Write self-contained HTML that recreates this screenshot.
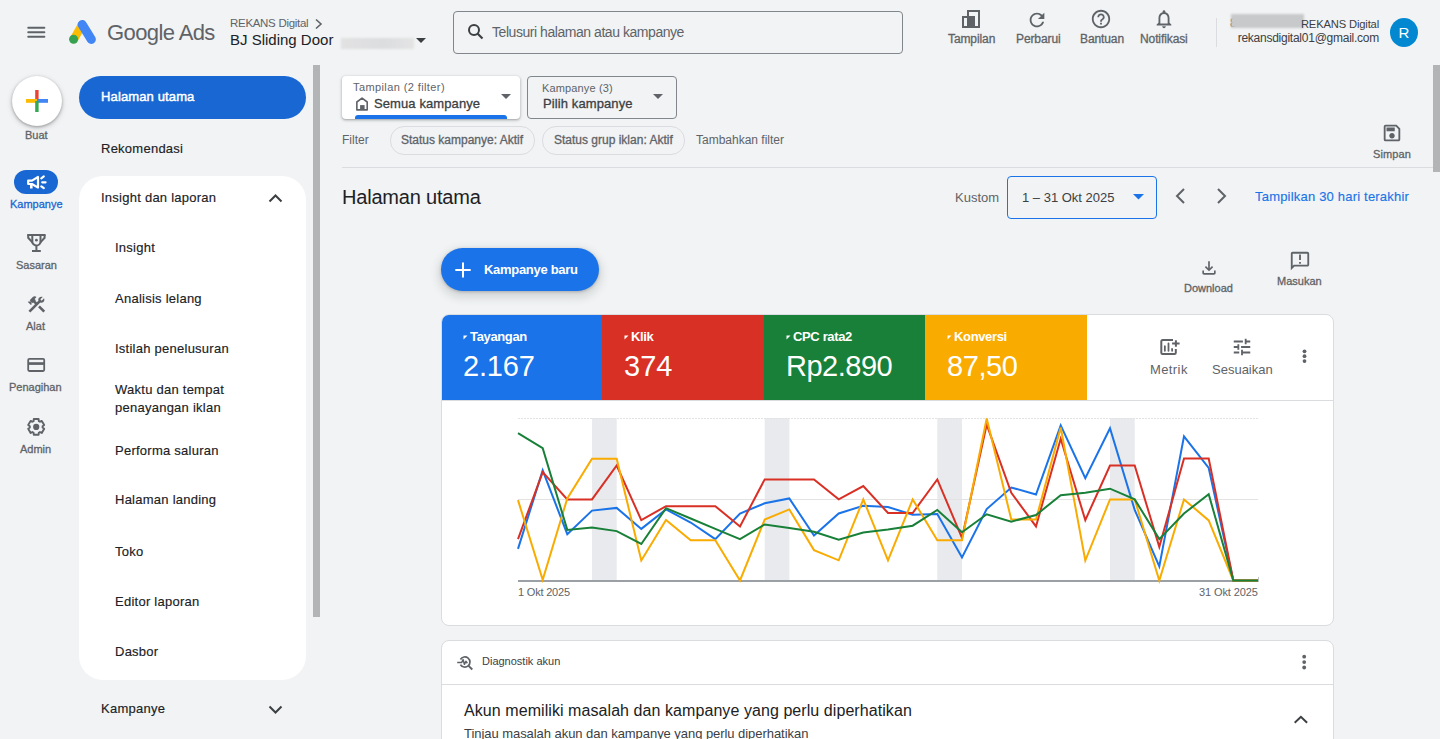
<!DOCTYPE html>
<html><head><meta charset="utf-8">
<style>
*{box-sizing:border-box;margin:0;padding:0}
html,body{width:1440px;height:739px;overflow:hidden;background:#f1f3f4;font-family:"Liberation Sans",sans-serif;color:#202124}
.a{position:absolute}
.t{position:absolute;white-space:nowrap;line-height:1}
.m{-webkit-text-stroke:0.3px currentColor}
.n{-webkit-text-stroke:0.15px currentColor}
svg{position:absolute;overflow:visible}
</style></head><body>

<!-- ===== TOP BAR ===== -->
<svg style="left:0;top:0" width="1440" height="64">
  <!-- hamburger -->
  <path d="M28.2,27.8 H44.4 M28.2,32.2 H44.4 M28.2,36.7 H44.4" stroke="#5f6368" stroke-width="1.9" stroke-linecap="round"/>
  <!-- ads logo -->
  <line x1="74" y1="39" x2="82" y2="25" stroke="#fbbc04" stroke-width="8.5" stroke-linecap="round"/>
  <line x1="82.2" y1="24.6" x2="91.3" y2="39.3" stroke="#4285f4" stroke-width="9.2" stroke-linecap="round"/>
  <circle cx="73.6" cy="39.2" r="4.5" fill="#36a150"/>
</svg>
<div class="t" style="left:107px;top:22px;font-size:22px;letter-spacing:-0.6px;color:#5f6368">Google Ads</div>
<div class="t" style="left:230px;top:17.5px;font-size:11.5px;letter-spacing:-0.3px;color:#5f6368">REKANS Digital</div>
<svg style="left:314px;top:17.5px" width="10" height="12"><path d="M2 1.5 L7 6 L2 10.5" fill="none" stroke="#5f6368" stroke-width="1.6"/></svg>
<div class="t" style="left:230px;top:32px;font-size:15px;color:#202124">BJ Sliding Door</div>
<div class="a" style="left:341px;top:38px;width:73px;height:11px;background:linear-gradient(90deg,#e2e2e3,#dcdddf 60%,#e4e4e5);filter:blur(0.8px)"></div>
<svg style="left:416px;top:38px" width="11" height="6"><path d="M0 0 L10 0 L5 5 Z" fill="#3c4043"/></svg>

<!-- search -->
<div class="a" style="left:453px;top:11px;width:450px;height:43px;border:1px solid #80868b;border-radius:4px"></div>
<svg style="left:467px;top:23px" width="18" height="18"><circle cx="7" cy="7" r="5" fill="none" stroke="#3c4043" stroke-width="2"/><line x1="10.5" y1="10.5" x2="15.5" y2="15.5" stroke="#3c4043" stroke-width="2.2"/></svg>
<div class="t" style="left:492px;top:25px;font-size:14px;letter-spacing:-0.45px;color:#5f6368">Telusuri halaman atau kampanye</div>

<!-- top right icons -->
<svg style="left:955px;top:5px" width="30" height="30"><rect x="968" y="11" width="11" height="16" transform="translate(-955,-5)" fill="none" stroke="#5f6368" stroke-width="2"/><rect x="963" y="17" width="11" height="10" transform="translate(-955,-5)" fill="none" stroke="#5f6368" stroke-width="2"/><rect x="967" y="16" width="8" height="12" transform="translate(-955,-5)" fill="#5f6368"/></svg>
<svg style="left:1026px;top:9px" width="22" height="22" viewBox="0 0 24 24"><path d="M17.65 6.35A7.958 7.958 0 0 0 12 4c-4.42 0-7.99 3.58-7.99 8s3.57 8 7.99 8c3.73 0 6.84-2.55 7.73-6h-2.08A5.99 5.99 0 0 1 12 18c-3.31 0-6-2.69-6-6s2.69-6 6-6c1.66 0 3.14.69 4.22 1.78L13 11h7V4l-2.35 2.35z" fill="#5f6368"/></svg>
<svg style="left:1090px;top:8px" width="22" height="22" viewBox="0 0 24 24"><path d="M11 18h2v-2h-2v2zm1-16C6.48 2 2 6.48 2 12s4.48 10 10 10 10-4.48 10-10S17.52 2 12 2zm0 18c-4.41 0-8-3.59-8-8s3.59-8 8-8 8 3.59 8 8-3.59 8-8 8zm0-14c-2.21 0-4 1.79-4 4h2c0-1.1.9-2 2-2s2 .9 2 2c0 2-3 1.75-3 5h2c0-2.25 3-2.5 3-5 0-2.21-1.79-4-4-4z" fill="#5f6368"/></svg>
<svg style="left:1153px;top:8px" width="22" height="22" viewBox="0 0 24 24"><path d="M12 22c1.1 0 2-.9 2-2h-4c0 1.1.89 2 2 2zm6-6v-5c0-3.07-1.64-5.64-4.5-6.32V4c0-.83-.67-1.5-1.5-1.5s-1.5.67-1.5 1.5v.68C7.63 5.36 6 7.92 6 11v5l-2 2v1h16v-1l-2-2zm-2 1H8v-6c0-2.48 1.51-4.5 4-4.5s4 2.02 4 4.5v6z" fill="#5f6368"/></svg>
<div class="t m" style="left:948px;top:33px;font-size:12px;letter-spacing:-0.1px;color:#5f6368">Tampilan</div>
<div class="t m" style="left:1016px;top:33px;font-size:12px;letter-spacing:-0.1px;color:#5f6368">Perbarui</div>
<div class="t m" style="left:1080px;top:33px;font-size:12px;letter-spacing:-0.1px;color:#5f6368">Bantuan</div>
<div class="t m" style="left:1140px;top:33px;font-size:12px;letter-spacing:-0.1px;color:#5f6368">Notifikasi</div>
<div class="a" style="left:1216px;top:18px;width:1px;height:29px;background:#dadce0"></div>
<div class="t" style="left:1230px;top:17px;font-size:12px;color:#3c4043">8</div>
<div class="a" style="left:1231px;top:14px;width:73px;height:14px;background:#c8c9cb;filter:blur(1px)"></div>
<div class="t" style="right:61px;top:19px;font-size:11.2px;letter-spacing:-0.15px;color:#3c4043">REKANS Digital</div>
<div class="t" style="right:61px;top:32px;font-size:12px;letter-spacing:-0.25px;color:#3c4043">rekansdigital01@gmail.com</div>
<div class="a" style="left:1390px;top:18px;width:28px;height:29px;border-radius:50%;background:#0288d1"></div>
<div class="t" style="left:1398.5px;top:25px;font-size:15px;color:#fff">R</div>


<!-- ===== RAIL ===== -->
<div class="a" style="left:12px;top:76px;width:50px;height:50px;border-radius:50%;background:#fff;box-shadow:0 1px 3px rgba(0,0,0,.3),0 2px 6px rgba(0,0,0,.15)"></div>
<svg style="left:0;top:0" width="60" height="120">
  <rect x="35.2" y="90" width="3.4" height="11" fill="#ea4335"/>
  <rect x="26" y="99" width="11" height="3.8" fill="#fbbc04"/>
  <rect x="37" y="99" width="11" height="3.8" fill="#4285f4"/>
  <rect x="35.2" y="101" width="3.4" height="11" fill="#34a853"/>
</svg>
<div class="t m" style="left:25px;top:130px;font-size:11px;color:#5f6368">Buat</div>

<div class="a" style="left:14px;top:170px;width:44px;height:24px;border-radius:12px;background:#1967d2"></div>
<svg style="left:12px;top:168px" width="48" height="28"><path d="M16.2,12.6 H20 L26,9 V19.6 L20,16 H16.2 Z" fill="none" stroke="#fff" stroke-width="2.2" stroke-linejoin="round"/><path d="M19.3,16 V20.5" stroke="#fff" stroke-width="2.6"/><path d="M29.3,10.3 L31.8,8.4 M30.2,14.3 H33.6 M29.3,18.3 L31.8,20.2" stroke="#fff" stroke-width="2.2" stroke-linecap="round"/></svg>
<div class="t m" style="left:10px;top:199px;font-size:11px;color:#1967d2">Kampanye</div>

<svg style="left:20px;top:225px" width="35" height="35"><g fill="none" stroke="#5f6368" stroke-width="2"><path d="M7.2,10 H25.6"/><path d="M8.2,10 V12.8 L12.6,17.6"/><path d="M24.6,10 V12.8 L20.2,17.6"/><path d="M12.3,10 V16.4 A4.1,4.1 0 0 0 20.5,16.4 V10"/><path d="M16.4,20.5 V26"/><path d="M12,26 H20.8"/></g><circle cx="16.4" cy="15.2" r="1.4" fill="#5f6368"/></svg>
<div class="t m" style="left:16px;top:260px;font-size:11px;color:#5f6368">Sasaran</div>

<svg style="left:25.5px;top:293.5px" width="21" height="21" viewBox="0 0 24 24"><path d="M13.78 15.17l2.12-2.12 6.01 6.01-2.12 2.12zM17.5 10c1.93 0 3.5-1.57 3.5-3.5 0-.58-.16-1.12-.41-1.6l-2.7 2.7-1.49-1.49 2.7-2.7c-.48-.25-1.02-.41-1.6-.41C15.57 3 14 4.57 14 6.5c0 .41.08.8.21 1.16l-1.85 1.85-1.78-1.78.71-.71-1.41-1.41L12 3.49a3 3 0 0 0-4.24 0L4.22 7.03l1.41 1.41H2.81l-.71.71 3.54 3.54.71-.71V9.15l1.41 1.41.71-.71 1.78 1.78-7.41 7.41 2.12 2.12L16.34 9.790c.36.13.75.21 1.16.21z" fill="#5f6368"/></svg>
<div class="t m" style="left:26px;top:321px;font-size:11px;color:#5f6368">Alat</div>

<svg style="left:0;top:340px" width="60" height="40"><rect x="28.2" y="18.9" width="16" height="12.1" rx="1.2" fill="none" stroke="#5f6368" stroke-width="1.8"/><rect x="28" y="22.2" width="17" height="2.7" fill="#5f6368"/></svg>
<div class="t m" style="left:9px;top:382px;font-size:11px;color:#5f6368">Penagihan</div>

<svg style="left:0;top:0" width="60" height="440"><path d="M33.59,421.06 L33.78,419.07 L38.62,419.07 L38.81,421.06 L39.96,421.72 L41.77,420.88 L44.20,425.08 L42.57,426.24 L42.57,427.56 L44.20,428.72 L41.77,432.92 L39.96,432.08 L38.81,432.74 L38.62,434.73 L33.78,434.73 L33.59,432.74 L32.44,432.08 L30.63,432.92 L28.20,428.72 L29.83,427.56 L29.83,426.24 L28.20,425.08 L30.63,420.88 L32.44,421.72 Z" fill="none" stroke="#5f6368" stroke-width="1.9" stroke-linejoin="round"/><circle cx="36.2" cy="426.9" r="3.1" fill="#5f6368"/></svg>
<div class="t m" style="left:20px;top:444px;font-size:11px;color:#5f6368">Admin</div>

<!-- ===== NAV DRAWER ===== -->
<div class="a" style="left:79px;top:76px;width:227px;height:43px;border-radius:22px;background:#1967d2"></div>
<div class="t" style="left:101px;top:90px;font-size:13px;-webkit-text-stroke:0.45px #fff;letter-spacing:0.13px;color:#fff">Halaman utama</div>
<div class="t n" style="left:101px;top:141.5px;font-size:13px;letter-spacing:0.25px;color:#202124">Rekomendasi</div>
<div class="a" style="left:79px;top:176px;width:227px;height:504px;border-radius:24px;background:#fff"></div>
<div class="t n" style="left:101px;top:191px;font-size:13px;letter-spacing:0.25px;color:#202124">Insight dan laporan</div>
<svg style="left:268px;top:192px" width="16" height="12"><path d="M1.5 9.5 L7.5 3.5 L13.5 9.5" fill="none" stroke="#3c4043" stroke-width="2"/></svg>
<div class="t n" style="left:115px;top:241px;font-size:13px;letter-spacing:0.25px;color:#202124">Insight</div>
<div class="t n" style="left:115px;top:292px;font-size:13px;letter-spacing:0.25px;color:#202124">Analisis lelang</div>
<div class="t n" style="left:115px;top:342px;font-size:13px;letter-spacing:0.25px;color:#202124">Istilah penelusuran</div>
<div class="t n" style="left:115px;top:383px;font-size:13px;letter-spacing:0.25px;color:#202124">Waktu dan tempat</div>
<div class="t n" style="left:115px;top:401px;font-size:13px;letter-spacing:0.25px;color:#202124">penayangan iklan</div>
<div class="t n" style="left:115px;top:444px;font-size:13px;letter-spacing:0.25px;color:#202124">Performa saluran</div>
<div class="t n" style="left:115px;top:493px;font-size:13px;letter-spacing:0.25px;color:#202124">Halaman landing</div>
<div class="t n" style="left:115px;top:545px;font-size:13px;letter-spacing:0.25px;color:#202124">Toko</div>
<div class="t n" style="left:115px;top:595px;font-size:13px;letter-spacing:0.25px;color:#202124">Editor laporan</div>
<div class="t n" style="left:115px;top:645px;font-size:13px;letter-spacing:0.25px;color:#202124">Dasbor</div>
<div class="t n" style="left:101px;top:702px;font-size:13px;letter-spacing:0.25px;color:#202124">Kampanye</div>
<svg style="left:268px;top:703.5px" width="16" height="12"><path d="M1.5 2.5 L7.5 8.5 L13.5 2.5" fill="none" stroke="#3c4043" stroke-width="2"/></svg>
<!-- scrollbar -->
<div class="a" style="left:313px;top:65px;width:7px;height:552px;background:#b3b4b6"></div>
<div class="a" style="left:1433px;top:65px;width:7px;height:107px;background:#b3b4b6"></div>


<!-- ===== MAIN ===== -->
<!-- filter boxes -->
<div class="a" style="left:342px;top:76px;width:178px;height:43px;border-radius:4px;background:#fff;box-shadow:0 1px 2px rgba(60,64,67,.3),0 1px 3px 1px rgba(60,64,67,.15);overflow:hidden">
  <div class="a" style="left:13px;top:39px;width:152px;height:6px;border-radius:3px;background:#1a73e8"></div>
</div>
<div class="t" style="left:353px;top:82px;font-size:11px;letter-spacing:0.4px;color:#5f6368">Tampilan (2 filter)</div>
<svg style="left:352px;top:94px" width="20" height="20"><path d="M4.85,15.9 V8 L10.05,4.1 L15.2,8 V15.9 Z" fill="none" stroke="#5f6368" stroke-width="1.6" stroke-linejoin="round"/><rect x="8.1" y="11.1" width="4.5" height="4.9" fill="#5f6368"/></svg>
<div class="t m" style="left:374px;top:97px;font-size:13px;letter-spacing:0.1px;color:#3c4043">Semua kampanye</div>
<svg style="left:501px;top:94px" width="10" height="6"><path d="M0 0 L10 0 L5 5 Z" fill="#5f6368"/></svg>

<div class="a" style="left:527px;top:76px;width:150px;height:43px;border-radius:4px;border:1px solid #80868b"></div>
<div class="t" style="left:542px;top:83px;font-size:11px;letter-spacing:0.15px;color:#5f6368">Kampanye (3)</div>
<div class="t m" style="left:543px;top:97px;font-size:13px;letter-spacing:0.1px;color:#3c4043">Pilih kampanye</div>
<svg style="left:653px;top:94px" width="10" height="6"><path d="M0 0 L10 0 L5 5 Z" fill="#5f6368"/></svg>

<div class="t" style="left:342px;top:134px;font-size:12px;color:#5f6368">Filter</div>
<div class="a" style="left:390px;top:126px;width:145px;height:29px;border-radius:14px;border:1px solid #dadce0"></div>
<div class="t m" style="left:401px;top:134px;font-size:12px;color:#5f6368">Status kampanye: Aktif</div>
<div class="a" style="left:542px;top:126px;width:143px;height:29px;border-radius:14px;border:1px solid #dadce0"></div>
<div class="t m" style="left:554px;top:134px;font-size:12px;color:#5f6368">Status grup iklan: Aktif</div>
<div class="t" style="left:696px;top:134px;font-size:12px;color:#5f6368">Tambahkan filter</div>

<svg style="left:1381px;top:122px" width="22" height="22" viewBox="0 0 24 24"><path d="M17 3H5a2 2 0 0 0-2 2v14a2 2 0 0 0 2 2h14c1.1 0 2-.9 2-2V7l-4-4zm2 16H5V5h11.17L19 7.83V19zm-7-7c-1.66 0-3 1.34-3 3s1.34 3 3 3 3-1.34 3-3-1.34-3-3-3zM6 6h9v4H6z" fill="#5f6368"/></svg>
<div class="t m" style="left:1373px;top:149px;font-size:11px;letter-spacing:0.1px;color:#5f6368">Simpan</div>
<div class="a" style="left:342px;top:167px;width:1091px;height:1px;background:#dadce0"></div>

<!-- heading -->
<div class="t" style="left:342px;top:187px;font-size:20px;letter-spacing:-0.2px;color:#202124">Halaman utama</div>
<div class="t" style="left:955px;top:191px;font-size:13px;color:#5f6368">Kustom</div>
<div class="a" style="left:1007px;top:176px;width:150px;height:43px;border-radius:4px;border:1px solid #1a73e8"></div>
<div class="t" style="left:1022px;top:191px;font-size:13px;color:#3c4043">1 – 31 Okt 2025</div>
<svg style="left:1133px;top:194px" width="11" height="6"><path d="M0 0 L11 0 L5.5 5.5 Z" fill="#1a73e8"/></svg>
<svg style="left:1172px;top:187px" width="16" height="18"><path d="M12 2 L5 9 L12 16" fill="none" stroke="#5f6368" stroke-width="2"/></svg>
<svg style="left:1214px;top:187px" width="16" height="18"><path d="M4 2 L11 9 L4 16" fill="none" stroke="#5f6368" stroke-width="2"/></svg>
<div class="t n" style="left:1255px;top:190px;font-size:13px;letter-spacing:0.2px;color:#1a73e8">Tampilkan 30 hari terakhir</div>

<!-- kampanye baru -->
<div class="a" style="left:441px;top:248px;width:158px;height:43px;border-radius:22px;background:#1a73e8;box-shadow:0 1px 3px rgba(60,64,67,.3),0 4px 8px 3px rgba(60,64,67,.15)"></div>
<svg style="left:454px;top:261px" width="18" height="18"><path d="M9 1.5v15 M1.3 9h15.4" stroke="#fff" stroke-width="2"/></svg>
<div class="t" style="left:484px;top:263px;font-size:13px;font-weight:bold;letter-spacing:-0.3px;color:#fff">Kampanye baru</div>

<svg style="left:1199px;top:258px" width="20" height="20" viewBox="0 0 24 24"><path d="M18 15v3H6v-3H4v3c0 1.1.9 2 2 2h12c1.1 0 2-.9 2-2v-3h-2zm-1-4l-1.41-1.41L13 12.17V4h-2v8.17L8.41 9.59 7 11l5 5 5-5z" fill="#5f6368"/></svg>
<div class="t m" style="left:1184px;top:283px;font-size:11px;color:#5f6368">Download</div>
<svg style="left:1289px;top:250px" width="22" height="22" viewBox="0 0 24 24"><path d="M20 2H4c-1.1 0-1.99.9-1.99 2L2 22l4-4h14c1.1 0 2-.9 2-2V4c0-1.1-.9-2-2-2zm0 14H5.17L4 17.17V4h16v12zM11 5h2v6h-2zm0 8h2v2h-2z" fill="#5f6368"/></svg>
<div class="t m" style="left:1277px;top:276px;font-size:11px;color:#5f6368">Masukan</div>

<!-- chart card -->
<div class="a" style="left:441px;top:314px;width:893px;height:312px;border-radius:8px;background:#fff;border:1px solid #dadce0;overflow:hidden">
  <div class="a" style="left:0;top:0;width:160px;height:85px;background:#1a73e8"></div>
  <div class="a" style="left:160px;top:0;width:162px;height:85px;background:#d93025"></div>
  <div class="a" style="left:322px;top:0;width:161px;height:85px;background:#188038"></div>
  <div class="a" style="left:483px;top:0;width:162px;height:85px;background:#f9ab00"></div>
  <div class="a" style="left:0;top:85px;width:893px;height:1px;background:#dadce0"></div>
</div>
<svg style="left:463px;top:335px" width="6" height="6"><path d="M0.5 0.5 L4.5 0.5 L0.5 4.5Z" fill="#fff"/></svg>
<div class="t" style="left:470px;top:330px;font-size:13px;font-weight:bold;letter-spacing:-0.35px;color:#fff">Tayangan</div>
<div class="t" style="left:463px;top:352px;font-size:29px;letter-spacing:-0.2px;color:#fff">2.167</div>
<svg style="left:624px;top:335px" width="6" height="6"><path d="M0.5 0.5 L4.5 0.5 L0.5 4.5Z" fill="#fff"/></svg>
<div class="t" style="left:631px;top:330px;font-size:13px;font-weight:bold;letter-spacing:-0.35px;color:#fff">Klik</div>
<div class="t" style="left:624px;top:352px;font-size:29px;color:#fff">374</div>
<svg style="left:786px;top:335px" width="6" height="6"><path d="M0.5 0.5 L4.5 0.5 L0.5 4.5Z" fill="#fff"/></svg>
<div class="t" style="left:793px;top:330px;font-size:13px;font-weight:bold;letter-spacing:-0.35px;color:#fff">CPC rata2</div>
<div class="t" style="left:786px;top:352px;font-size:29px;letter-spacing:-0.5px;color:#fff">Rp2.890</div>
<svg style="left:947px;top:335px" width="6" height="6"><path d="M0.5 0.5 L4.5 0.5 L0.5 4.5Z" fill="#fff"/></svg>
<div class="t" style="left:954px;top:330px;font-size:13px;font-weight:bold;letter-spacing:-0.35px;color:#fff">Konversi</div>
<div class="t" style="left:947px;top:352px;font-size:29px;letter-spacing:-0.4px;color:#fff">87,50</div>

<svg style="left:1155px;top:334px" width="30" height="26"><g fill="none" stroke="#5f6368" stroke-width="2"><path d="M18,6.1 H7.6 A1.3,1.3 0 0 0 6.3,7.4 V18.7 A1.3,1.3 0 0 0 7.6,20 H19.5 A1.3,1.3 0 0 0 20.8,18.7 V15.1"/><path d="M20.9,6.2 V12.7 M17.1,9.6 H24.6"/></g><g stroke="#5f6368" stroke-width="1.8" stroke-linecap="round"><path d="M9.85,12.2 V16.8 M13.5,9.4 V16.8 M17.1,15 V16.8"/></g></svg>
<div class="t" style="left:1150px;top:363px;font-size:13px;letter-spacing:0.4px;color:#5f6368">Metrik</div>
<svg style="left:1231px;top:336px" width="22" height="22" viewBox="0 0 24 24"><path d="M3 17v2h6v-2H3zM3 5v2h10V5H3zm10 16v-2h8v-2h-8v-2h-2v6h2zM7 9v2H3v2h4v2h2V9H7zm14 4v-2H11v2h10zm-6-4h2V7h4V5h-4V3h-2v6z" fill="#5f6368"/></svg>
<div class="t" style="left:1212px;top:363px;font-size:13px;color:#5f6368">Sesuaikan</div>
<svg style="left:1300px;top:346px" width="10" height="20"><circle cx="4.5" cy="5.3" r="1.9" fill="#5f6368"/><circle cx="4.5" cy="10.2" r="1.9" fill="#5f6368"/><circle cx="4.5" cy="15.1" r="1.9" fill="#5f6368"/></svg>

<!-- chart -->
<svg style="left:0;top:0" width="1440" height="739">
  <rect x="592" y="418" width="24.7" height="163" fill="#e8eaed"/>
  <rect x="764.7" y="418" width="24.7" height="163" fill="#e8eaed"/>
  <rect x="937.3" y="418" width="24.7" height="163" fill="#e8eaed"/>
  <rect x="1110" y="418" width="24.7" height="163" fill="#e8eaed"/>
  <line x1="518" y1="418.5" x2="1258" y2="418.5" stroke="#e3e3e3" stroke-width="1" stroke-dasharray="2 1"/>
  <line x1="518" y1="499.5" x2="1258" y2="499.5" stroke="#e3e3e3" stroke-width="1"/>
  <line x1="518" y1="581" x2="1258" y2="581" stroke="#9aa0a6" stroke-width="2"/>
  <line x1="1258.5" y1="577" x2="1258.5" y2="582" stroke="#bdc1c6" stroke-width="1"/>
  <g fill="none" stroke-width="2" stroke-linejoin="miter">
  <polyline points="518.0,548.9 542.7,470.4 567.3,534.2 592.0,510.6 616.7,507.9 641.3,528.9 666.0,509.4 690.7,522.5 715.3,539.1 740.0,513.5 764.7,503.3 789.3,498.4 814.0,535.5 838.7,513.5 863.3,505.7 888.0,507.0 912.7,514.8 937.3,514.0 962.0,557.4 986.7,509.1 1011.3,487.5 1036.0,494.5 1060.7,425.3 1085.3,478.2 1110.0,428.3 1134.7,509.9 1159.3,566.4 1184.0,436.3 1208.7,468.0 1233.3,580.5 1258.0,580.5" stroke="#1a73e8"/>
  <polyline points="518.0,539.1 542.7,472.1 567.3,499.4 592.0,499.4 616.7,465.5 641.3,520.1 666.0,506.2 690.7,506.2 715.3,506.2 740.0,526.4 764.7,479.4 789.3,479.4 814.0,479.4 838.7,499.4 863.3,486.0 888.0,513.0 912.7,513.0 937.3,479.4 962.0,537.9 986.7,424.6 1011.3,492.8 1036.0,526.4 1060.7,438.7 1085.3,520.1 1110.0,465.5 1134.7,465.5 1159.3,546.9 1184.0,458.5 1208.7,458.5 1233.3,580.5 1258.0,580.5" stroke="#d93025"/>
  <polyline points="518.0,500.1 542.7,579.8 567.3,498.4 592.0,458.7 616.7,458.7 641.3,560.5 666.0,520.1 690.7,540.3 715.3,540.3 740.0,580.5 764.7,519.6 789.3,509.4 814.0,550.1 838.7,560.3 863.3,499.4 888.0,560.3 912.7,499.4 937.3,540.3 962.0,540.3 986.7,418.5 1011.3,519.6 1036.0,519.6 1060.7,427.5 1085.3,560.5 1110.0,499.4 1134.7,499.4 1159.3,580.5 1184.0,499.4 1208.7,520.4 1233.3,580.5 1258.0,580.5" stroke="#f9ab00"/>
  <polyline points="518.0,433.1 542.7,448.2 567.3,529.9 592.0,527.4 616.7,531.1 641.3,544.0 666.0,508.2 690.7,518.5 715.3,528.8 740.0,539.1 764.7,524.5 789.3,528.1 814.0,531.8 838.7,539.6 863.3,532.5 888.0,529.4 912.7,525.7 937.3,509.9 962.0,532.3 986.7,514.3 1011.3,521.6 1036.0,515.0 1060.7,495.3 1085.3,492.8 1110.0,488.7 1134.7,499.4 1159.3,539.1 1184.0,513.5 1208.7,494.2 1233.3,580.5 1258.0,580.5" stroke="#188038"/>
  </g>
</svg>
<div class="t" style="left:518px;top:587px;font-size:11px;letter-spacing:-0.2px;color:#5f6368">1 Okt 2025</div>
<div class="t" style="left:1199px;top:587px;font-size:11px;letter-spacing:-0.1px;color:#5f6368">31 Okt 2025</div>

<!-- diagnostik card -->
<div class="a" style="left:441px;top:640px;width:893px;height:120px;border-radius:8px;background:#fff;border:1px solid #dadce0">
  <div class="a" style="left:0;top:43px;width:891px;height:1px;background:#dadce0"></div>
</div>
<svg style="left:453px;top:650px" width="24" height="24"><g fill="none" stroke="#5f6368" stroke-width="1.7"><path d="M7.43,9.45 A5.1,5.1 0 1 1 7.43,14.55"/><path d="M15.6,15.8 L19.3,19.5" stroke-width="1.9"/><path d="M4.2,12.6 H8.6 L10.1,9.6 L11.4,14.3 L12.9,11.3 L14.3,13.2" stroke-width="1.5" stroke-linejoin="round"/></g></svg>
<div class="t" style="left:482px;top:656px;font-size:11px;color:#3c4043">Diagnostik akun</div>
<svg style="left:1300px;top:652px" width="10" height="20"><circle cx="4.2" cy="4.7" r="1.9" fill="#5f6368"/><circle cx="4.2" cy="10.1" r="1.9" fill="#5f6368"/><circle cx="4.2" cy="15.5" r="1.9" fill="#5f6368"/></svg>
<div class="t" style="left:464px;top:703px;font-size:16px;letter-spacing:0.07px;color:#202124">Akun memiliki masalah dan kampanye yang perlu diperhatikan</div>
<div class="t" style="left:464px;top:727px;font-size:13px;letter-spacing:-0.05px;color:#3c4043">Tinjau masalah akun dan kampanye yang perlu diperhatikan</div>
<svg style="left:1292px;top:713px" width="18" height="12"><path d="M2.7 9.7 L8.9 3.8 L15.1 9.7" fill="none" stroke="#3c4043" stroke-width="2"/></svg>

</body></html>
